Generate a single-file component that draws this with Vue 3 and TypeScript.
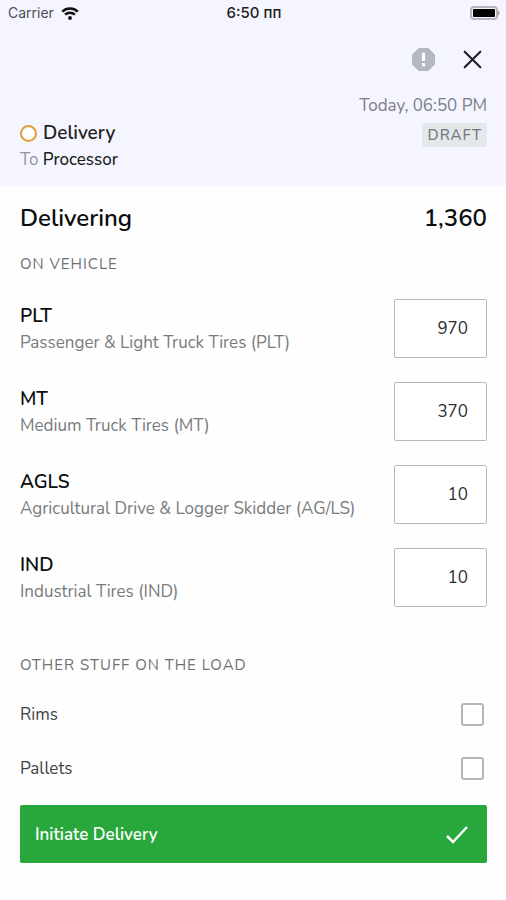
<script setup lang="ts">
import { computed, reactive } from 'vue'

interface TireLine {
  code: string
  name: string
  count: number
}

interface Extra {
  id: string
  label: string
  checked: boolean
}

const lines = reactive<TireLine[]>([
  { code: 'PLT', name: 'Passenger & Light Truck Tires (PLT)', count: 970 },
  { code: 'MT', name: 'Medium Truck Tires (MT)', count: 370 },
  { code: 'AGLS', name: 'Agricultural Drive & Logger Skidder (AG/LS)', count: 10 },
  { code: 'IND', name: 'Industrial Tires (IND)', count: 10 },
])

const extras = reactive<Extra[]>([
  { id: 'rims', label: 'Rims', checked: false },
  { id: 'pallets', label: 'Pallets', checked: false },
])

const total = computed(() =>
  lines.reduce((sum, line) => sum + (Number(line.count) || 0), 0).toLocaleString('en-US'),
)
</script>

<template>
  <div class="screen">
    <header class="top">
      <div class="status">
        <div class="carrier">
          <span>Carrier</span>
          <svg class="wifi" viewBox="0 0 18 13" aria-hidden="true">
            <path d="M1.2 4.6a11.4 11.4 0 0 1 15.6 0" />
            <path d="M4.1 7.7a7.2 7.2 0 0 1 9.8 0" />
            <circle cx="9" cy="11" r="1.9" />
          </svg>
        </div>
        <span class="clock">6:50 пп</span>
        <svg class="battery" viewBox="0 0 30 14" aria-hidden="true">
          <rect class="shell" x="1" y="1" width="26" height="12" rx="3" />
          <rect class="charge" x="3" y="3" width="22" height="8" rx="1" />
          <path class="tip" d="M28 4.5c2 .8 2 4.2 0 5z" />
        </svg>
      </div>

      <div class="actions">
        <button type="button" class="icon-button" aria-label="Report a problem">
          <svg class="alert" viewBox="0 0 24 24">
            <path class="octagon" d="M7.5 1.5h9L22.5 7.5v9L16.5 22.5h-9L1.5 16.5v-9z" />
            <path class="mark" d="M12 5.5v8M12 15.5v3" />
          </svg>
        </button>
        <button type="button" class="icon-button" aria-label="Close">
          <svg class="close" viewBox="0 0 24 24">
            <path d="M4.5 4.5l15 15M19.5 4.5l-15 15" />
          </svg>
        </button>
      </div>

      <div class="summary">
        <div class="job">
          <div class="job-title">
            <span class="ring"></span>
            <h1>Delivery</h1>
          </div>
          <p class="target">To <strong>Processor</strong></p>
        </div>
        <div class="meta">
          <time class="when">Today, 06:50 PM</time>
          <span class="badge">DRAFT</span>
        </div>
      </div>
    </header>

    <main class="content">
      <div class="total">
        <h2>Delivering</h2>
        <output>{{ total }}</output>
      </div>

      <h3>ON VEHICLE</h3>
      <div class="lines">
        <div v-for="line in lines" :key="line.code" class="line">
          <label :for="line.code">
            <span class="code">{{ line.code }}</span>
            <span class="name">{{ line.name }}</span>
          </label>
          <input :id="line.code" v-model="line.count" type="text" inputmode="numeric" />
        </div>
      </div>

      <h3>OTHER STUFF ON THE LOAD</h3>
      <div class="extras">
        <div v-for="extra in extras" :key="extra.id" class="extra">
          <label :for="extra.id">{{ extra.label }}</label>
          <input :id="extra.id" v-model="extra.checked" type="checkbox" />
        </div>
      </div>

      <button type="button" class="submit">
        <span>Initiate Delivery</span>
        <svg viewBox="0 0 24 24" aria-hidden="true">
          <path d="M2 13l6 6L22 4" />
        </svg>
      </button>
    </main>
  </div>
</template>

<style>
body {
  background: #fefefe;
}
</style>

<style scoped>
.screen {
  font-family: Nunito, Lato, 'Noto Sans', sans-serif;
  font-size: 17px;
  line-height: 24px;
  color: #1d1f21;
}

h1,
h2,
h3,
p {
  margin: 0;
}

button,
input {
  font: inherit;
}

svg {
  fill: none;
  stroke: currentColor;
}

.top {
  background: #f4f5fe;
  padding-bottom: 13px;
}

.status {
  display: grid;
  grid-template-columns: 1fr auto 1fr;
  align-items: center;
  height: 26px;
  padding: 0 6px 0 8px;
  font-family: Inter, 'Liberation Sans', sans-serif;
  font-size: 14px;
}

.carrier {
  display: flex;
  align-items: center;
  gap: 7px;
  color: #4c4e54;
}

.wifi {
  width: 18px;
  height: 13px;
  color: #111;
  stroke-width: 2.5;
}

.wifi circle {
  fill: currentColor;
  stroke: none;
}

.clock {
  font-size: 15px;
  font-weight: 500;
}

.battery {
  justify-self: end;
  width: 30px;
  height: 14px;
}

.shell {
  stroke: #b4b6ba;
  stroke-width: 2;
}

.charge {
  fill: #000;
  stroke: none;
}

.tip {
  fill: #a2a4a8;
  stroke: none;
}

.actions {
  display: flex;
  justify-content: flex-end;
  gap: 24px;
  padding: 21px 21px 22px;
}

.icon-button {
  display: flex;
  padding: 0;
  border: 0;
  background: none;
  color: #1d1f21;
}

.icon-button svg {
  width: 25px;
  height: 25px;
}

.octagon {
  fill: #b3b8c1;
  stroke: #b3b8c1;
  stroke-linejoin: round;
}

.mark {
  stroke: #fff;
  stroke-width: 3;
}

.close {
  stroke-width: 2;
  stroke-linecap: round;
}

.summary {
  display: flex;
  justify-content: space-between;
  align-items: flex-end;
  padding: 0 19px 0 20px;
}

.job-title {
  display: flex;
  align-items: center;
  gap: 6px;
  height: 28px;
}

.ring {
  box-sizing: border-box;
  width: 17px;
  height: 17px;
  border: 2px solid #dfa03a;
  border-radius: 50%;
  background: #fff;
}

h1 {
  font-size: 19px;
  font-weight: 600;
}

.target {
  line-height: 26px;
  color: #92959e;
}

.target strong {
  font-weight: 500;
  color: #1d1f21;
}

.meta {
  display: flex;
  flex-direction: column;
  align-items: flex-end;
  gap: 5px;
  padding-bottom: 26px;
}

.when {
  color: #7b7e86;
}

.badge {
  padding: 0 5px;
  border-radius: 3px;
  background: #e5e8ea;
  color: #74787c;
  font-size: 15px;
  font-weight: 500;
  letter-spacing: 1px;
}

.content {
  padding: 16px 19px 36px 20px;
}

.total {
  display: flex;
  justify-content: space-between;
  font-size: 24px;
  font-weight: 600;
  line-height: 32px;
  color: #0c0d0e;
}

h2 {
  font-size: 24px;
  font-weight: 600;
}

h3 {
  padding-top: 18px;
  font-size: 15px;
  font-weight: 400;
  letter-spacing: 1px;
  color: #6d7174;
}

.lines {
  display: grid;
  gap: 24px;
  padding: 23px 0 28px;
}

.line,
.extra {
  display: flex;
  align-items: center;
  justify-content: space-between;
}

.line label {
  display: grid;
  padding-top: 1px;
}

.code {
  font-size: 19px;
  font-weight: 600;
  line-height: 28px;
  color: #0c0d0e;
}

.name {
  line-height: 26px;
  color: #777b7d;
}

.line input {
  box-sizing: border-box;
  width: 93px;
  height: 59px;
  padding: 0 18px;
  border: 1px solid #b5babb;
  border-radius: 2px;
  background: #fff;
  color: #2b2d2f;
  text-align: right;
}

.extras {
  display: grid;
  gap: 30px;
  padding: 25px 3px 25px 0;
}

.extra label {
  padding-top: 2px;
  line-height: 22px;
  color: #3f4244;
}

.extra input {
  appearance: none;
  width: 23px;
  height: 23px;
  margin: 0;
  border: 2px solid #b4b7b9;
  border-radius: 3px;
  background: #fff;
}

.extra input:checked {
  background: #28a83c;
}

.submit {
  display: flex;
  align-items: center;
  justify-content: space-between;
  width: 100%;
  height: 58px;
  padding: 2px 18px 0 15px;
  border: 0;
  border-radius: 2px;
  background: #28a83c;
  color: #fff;
  font-weight: 600;
}

.submit svg {
  width: 24px;
  height: 24px;
  stroke-width: 2.5;
}
</style>
